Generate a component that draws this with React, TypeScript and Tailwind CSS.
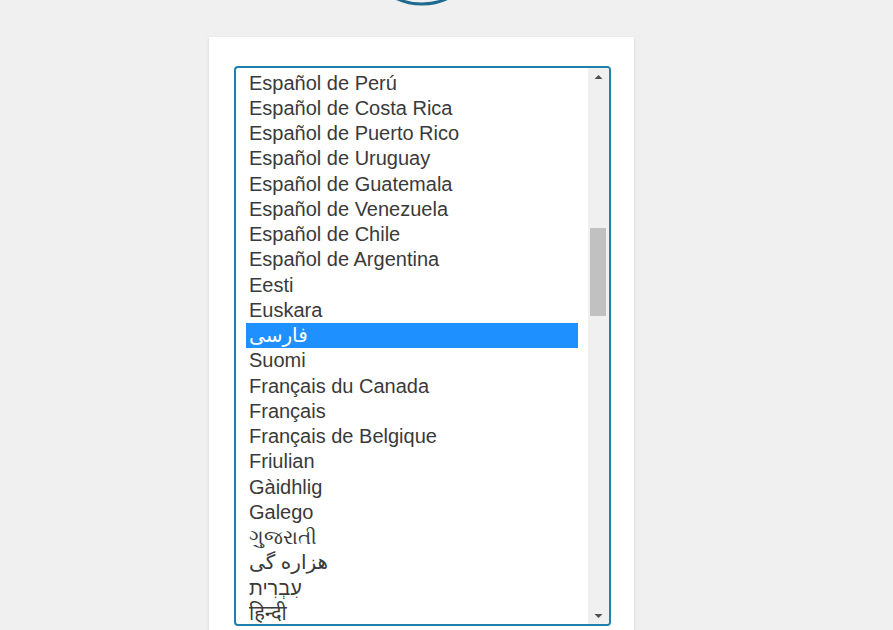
import React from "react";

const items = [
  "Español de Colombia",
  "Español de Perú",
  "Español de Costa Rica",
  "Español de Puerto Rico",
  "Español de Uruguay",
  "Español de Guatemala",
  "Español de Venezuela",
  "Español de Chile",
  "Español de Argentina",
  "Eesti",
  "Euskara",
  "فارسی",
  "Suomi",
  "Français du Canada",
  "Français",
  "Français de Belgique",
  "Friulian",
  "Gàidhlig",
  "Galego",
  "ગુજરાતી",
  "هزاره گی",
  "עִבְרִית",
  "हिन्दी",
];

export default function App() {
  return (
    <div
      className="w-full h-[630px] overflow-hidden bg-[#f0f0f0] flex flex-col items-start"
      style={{ fontFamily: '"Liberation Sans", Arial, "DejaVu Sans", "Noto Sans", sans-serif' }}
    >
      <svg width="64" height="6" viewBox="0 0 64 6" className="ml-[390px] shrink-0">
        <circle cx="32" cy="-56" r="60" fill="none" stroke="#1f6a90" strokeWidth="3" />
      </svg>
      <div className="ml-[209px] mt-[31px] w-[425px] bg-white shadow-[0_1px_3px_rgba(0,0,0,0.13)] pt-[29px] pl-[25px] pr-[23px] pb-10 shrink-0">
        <div className="h-[560px] border-2 border-[#1f7fae] rounded-[4px] flex overflow-hidden">
          <div className="flex-1 overflow-hidden px-[10px]">
            <div className="mt-[-22.6px]">
              {items.map((t, i) => (
                <div
                  key={i}
                  className={
                    "h-[25.25px] leading-[25.25px] text-[20px] pl-[3px] whitespace-nowrap " +
                    (i === 11 ? "bg-[#1e90ff] text-white" : "text-[#3a3a3a]")
                  }
                >
                  {t}
                </div>
              ))}
            </div>
          </div>
          <div className="w-[21px] bg-[#f0f0f0] flex flex-col items-center shrink-0">
            <div className="h-[17px] w-full flex items-center justify-center">
              <svg width="9" height="6" viewBox="0 0 9 6">
                <path d="M0.5 5 L4.5 1 L8.5 5 Z" fill="#505050" />
              </svg>
            </div>
            <div className="flex-1 w-full relative">
              <div className="absolute left-[2px] right-[3px] top-[143px] h-[88px] bg-[#c1c1c1]" />
            </div>
            <div className="h-[17px] w-full flex items-center justify-center">
              <svg width="9" height="6" viewBox="0 0 9 6">
                <path d="M0.5 1 L4.5 5 L8.5 1 Z" fill="#505050" />
              </svg>
            </div>
          </div>
        </div>
      </div>
    </div>
  );
}
